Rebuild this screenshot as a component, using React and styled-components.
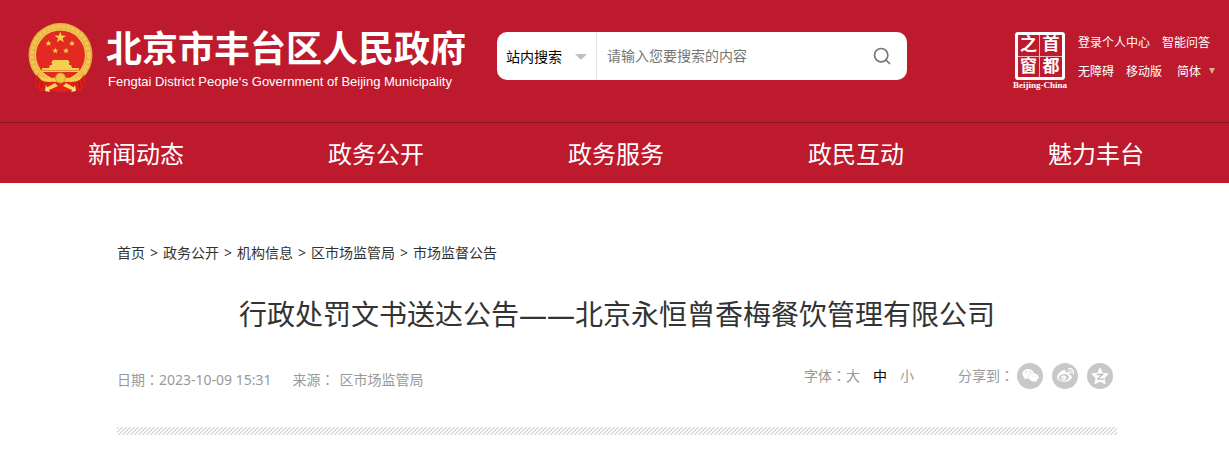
import React from "react"
import styled, { createGlobalStyle } from "styled-components"
import { FiSearch } from "react-icons/fi"
import { FaWeixin, FaWeibo } from "react-icons/fa"

const GlobalStyle = createGlobalStyle`
  * {
    box-sizing: border-box;
  }

  body {
    margin: 0;
    background-color: #fff;
    color: #333;
    font-family: "Noto Sans", "Noto Sans CJK SC", sans-serif;
    font-size: 14px;
    line-height: 20px;
  }

  a {
    color: inherit;
    text-decoration: none;
  }
`

const HeaderLayout = styled.header`
  background-color: #bd1a2d;
  color: #fff;
`

const TopBar = styled.div`
  display: flex;
  height: 122px;
  padding: 0 14px 0 28px;
`

const Brand = styled.a`
  display: flex;
  gap: 12px;
  padding-top: 22px;
`

const BrandName = styled.span`
  display: block;
  font-family: "Noto Sans CJK SC", sans-serif;
  font-size: 36px;
  font-weight: 700;
  line-height: 48px;
  white-space: nowrap;
`

const BrandEnglish = styled.span`
  display: block;
  padding: 4px 0 0 2px;
  font-family: "Liberation Sans", sans-serif;
  font-size: 13px;
  line-height: 16px;
`

const SearchForm = styled.form`
  display: flex;
  width: 410px;
  height: 48px;
  margin: 32px auto 0 31px;
  border-radius: 10px;
  background-color: #fff;
  overflow: hidden;
`

const ScopeLabel = styled.label`
  display: flex;
  align-items: center;
  width: 100px;
  padding: 2px 9px 0 9px;
  border-right: 1px solid #e4e4e4;
`

const Scope = styled.select`
  flex: 1;
  min-width: 0;
  padding: 0;
  border: 0;
  appearance: none;
  background: none;
  color: #000;
  font: inherit;
`

const Caret = styled.span`
  border: solid transparent;
  border-width: 6px 6px 0;
  border-top-color: #bfbfbf;
`

const SearchInput = styled.input`
  flex: 1;
  min-width: 0;
  padding: 0 10px;
  border: 0;
  outline: 0;
  background: none;
  font: inherit;

  &::placeholder {
    color: #757575;
  }
`

const SearchButton = styled.button`
  display: flex;
  align-items: center;
  padding: 0 15px;
  border: 0;
  background: none;
  color: #777;
  font-size: 20px;
`

const Tools = styled.div`
  display: flex;
  gap: 11px;
  padding-top: 32px;
`

const Capital = styled.a`
  display: flex;
  flex-direction: column;
  align-items: center;
  width: 54px;
`

const Seal = styled.span`
  display: grid;
  grid-template-columns: 1fr 1fr;
  width: 50px;
  height: 48px;
  border: 3px solid #fff;
  border-radius: 3px;
  font-family: "Liberation Sans", "Noto Sans CJK SC", sans-serif;
  font-size: 17px;
  font-weight: 700;
  line-height: 20px;
  text-align: center;

  & span:nth-child(odd) {
    border-right: 1px solid #f0b8be;
  }

  & span:nth-child(-n + 2) {
    border-bottom: 1px solid #f0b8be;
  }
`

const SealCaption = styled.span`
  font-family: "Liberation Serif", serif;
  font-size: 9px;
  font-weight: 700;
  line-height: 10px;
  white-space: nowrap;
`

const ToolLinks = styled.div`
  display: grid;
  row-gap: 9px;
  align-content: start;
  padding-top: 1px;
  font-size: 12px;
  white-space: nowrap;
`

const ToolRow = styled.div`
  display: flex;
  gap: 12px;
`

const Language = styled.a`
  display: flex;
  gap: 8px;
  padding-left: 3px;

  &::after {
    content: "";
    height: 0;
    margin-top: 6px;
    border: solid transparent;
    border-width: 6px 3px 0;
    border-top-color: #d8b47c;
  }
`

const NavBar = styled.nav`
  padding: 2px 0 0 3px;
  border-top: 1px solid #8b1421;
`

const NavList = styled.div`
  display: grid;
  grid-template-columns: repeat(5, 1fr);
  max-width: 1200px;
  margin: 0 auto;
  font-size: 24px;
  line-height: 58px;
  text-align: center;
`

const Page = styled.main`
  padding: 60px 0 16px 5px;
`

const Article = styled.article`
  max-width: 1000px;
  margin: 0 auto;
`

const Crumbs = styled.nav`
  display: flex;
  gap: 5px;
`

const Title = styled.h1`
  margin: 30px 0 0;
  color: #333;
  font-size: 28px;
  font-weight: 400;
  line-height: 42px;
  text-align: center;
`

const MetaRow = styled.div`
  display: flex;
  justify-content: space-between;
  margin-top: 26px;
  color: #999;
`

const Facts = styled.div`
  display: flex;
  align-items: baseline;
  gap: 21px;
  padding-top: 8px;
`

const Source = styled.span`
  display: flex;
  align-items: baseline;
  gap: 5px;
`

const Actions = styled.div`
  display: flex;
  align-items: center;
  gap: 44px;
  padding-right: 4px;
`

const Colon = styled.span`
  font-family: "Noto Sans CJK TC", sans-serif;
`

const SizePicker = styled.div`
  display: flex;
  align-items: baseline;
`

const SizeButton = styled.button`
  margin-right: 13px;
  padding: 0;
  border: 0;
  background: none;
  color: ${props => (props.$active ? "#000" : "#999")};
  font: inherit;

  &:last-child {
    margin-right: 0;
  }
`

const Share = styled.div`
  display: flex;
  align-items: center;
  gap: 3px;
`

const ShareList = styled.div`
  display: flex;
  gap: 9px;
`

const ShareButton = styled.button`
  display: flex;
  align-items: center;
  justify-content: center;
  width: 26px;
  height: 26px;
  padding: 0;
  border: 0;
  border-radius: 50%;
  background-color: #c8c8c8;
  color: #fff;
  font-size: 17px;
`

const Stripes = styled.div`
  height: 8px;
  margin-top: 37px;
  background-image: linear-gradient(
    135deg,
    #dcdcdc 25%,
    #fff 25%,
    #fff 50%,
    #dcdcdc 50%,
    #dcdcdc 75%,
    #fff 75%
  );
  background-size: 4px 4px;
`

const NAV = ["新闻动态", "政务公开", "政务服务", "政民互动", "魅力丰台"]
const CRUMBS = ["首页", "政务公开", "机构信息", "区市场监管局", "市场监督公告"]

const starPoints = (cx, cy, r) =>
  Array.from({ length: 10 }, (_, i) => {
    const radius = i % 2 ? r * 0.4 : r
    const angle = (i * Math.PI) / 5 - Math.PI / 2
    return `${cx + radius * Math.cos(angle)},${cy + radius * Math.sin(angle)}`
  }).join(" ")

const Emblem = () => (
  <svg width="66" height="72" viewBox="0 0 66 72" aria-hidden="true">
    <defs>
      <linearGradient id="gold" x1="0" y1="0" x2="0" y2="1">
        <stop offset="0" stopColor="#e9b544" />
        <stop offset="0.5" stopColor="#dfa53a" />
        <stop offset="1" stopColor="#f3cb4a" />
      </linearGradient>
    </defs>
    <ellipse cx="32.5" cy="33" rx="32" ry="32" fill="url(#gold)" />
    <circle cx="32.5" cy="33" r="28.5" fill="none" stroke="#f0c552" strokeWidth="4" strokeDasharray="4 1" />
    <circle cx="32.5" cy="33" r="25.5" fill="#f6d35a" />
    <circle cx="32.5" cy="33" r="24.5" fill="#e32a22" />
    <g fill="#f5cf4e">
      <polygon points={starPoints(32.3, 15.5, 6)} />
      <polygon points={starPoints(20.5, 21.5, 3.2)} />
      <polygon points={starPoints(44, 21.5, 3.2)} />
      <polygon points={starPoints(27.3, 28.8, 3.2)} />
      <polygon points={starPoints(38, 28.8, 3.2)} />
      <path d="M25 38h15l2 3H23zM24 41h17v2H24zM22 43h21l1 3H21zM14 46h37v4H14z" />
    </g>
    <path d="M14 48.5h37" stroke="#e0952f" strokeWidth="1" />
    {/* ribbons knotted under the wheat ring */}
    <path d="M9 51q5 5 13 6l8 6-8 7-5-2-5 2-2-5-3 1z" fill="#d91f1c" />
    <path d="M56 51q-5 5-13 6l-8 6 8 7 5-2 5 2 2-5 3 1z" fill="#d91f1c" />
    <path d="M20 60h25v8q-12 4-25 0z" fill="#e2231d" />
    <path d="M8 50q5 6 14 6t10-5q2 5 11 5t14-6q-3 10-14 10-7 0-11-3-4 3-11 3Q11 60 8 50z" fill="#f6cd48" />
    <circle cx="32.5" cy="56" r="5" fill="#f3c545" stroke="#d8922b" strokeWidth="1" />
    <path d="M27 61l-9 5 1 3 11-5zM38 61l9 5-1 3-11-5z" fill="#f7d65a" />
    <path d="M18 63l4 7-5-1zM47 63l-4 7 5-1z" fill="#fbe27c" />
    <path d="M11 57l-2 7M54 57l2 7M14 60l-1 6M51 60l1 6" stroke="#a9151a" strokeWidth="1" />
  </svg>
)

const QzoneIcon = () => (
  <svg width="20" height="20" viewBox="0 0 20 20" aria-hidden="true">
    <path
      d="M10 2l2.4 5.2 5.800.7-4.300 4 1.200 5.900L10 15l-5.100 2.800 1.200-5.900-4.300-4 5.800-.7z"
      fill="#fff"
      stroke="#fff"
      strokeLinejoin="round"
    />
    <path d="M6.800 8.500h5.800L7.800 12.800q3 .7 6 .2" fill="none" stroke="#bbb" strokeWidth="1.3" />
  </svg>
)

const App = () => (
  <>
    <GlobalStyle />
    <HeaderLayout>
      <TopBar>
        <Brand href="#">
          <Emblem />
          <span>
            <BrandName>北京市丰台区人民政府</BrandName>
            <BrandEnglish>Fengtai District People‘s Government of Beijing Municipality</BrandEnglish>
          </span>
        </Brand>
        <SearchForm>
          <ScopeLabel>
            <Scope aria-label="搜索范围">
              <option>站内搜索</option>
            </Scope>
            <Caret />
          </ScopeLabel>
          <SearchInput aria-label="搜索" placeholder="请输入您要搜索的内容" />
          <SearchButton type="button" aria-label="搜索"><FiSearch /></SearchButton>
        </SearchForm>
        <Tools>
          <Capital href="#">
            <Seal><span>之</span><span>首</span><span>窗</span><span>都</span></Seal>
            <SealCaption>Beijing-China</SealCaption>
          </Capital>
          <ToolLinks>
            <ToolRow><a href="#">登录个人中心</a><a href="#">智能问答</a></ToolRow>
            <ToolRow><a href="#">无障碍</a><a href="#">移动版</a><Language href="#">简体</Language></ToolRow>
          </ToolLinks>
        </Tools>
      </TopBar>
      <NavBar>
        <NavList>
          {NAV.map(item => <a href="#" key={item}>{item}</a>)}
        </NavList>
      </NavBar>
    </HeaderLayout>
    <Page>
      <Article>
        <Crumbs>
          {CRUMBS.map((item, i) => (
            <React.Fragment key={item}>
              {i > 0 && <span>&gt;</span>}
              <a href="#">{item}</a>
            </React.Fragment>
          ))}
        </Crumbs>
        <Title>行政处罚文书送达公告——北京永恒曾香梅餐饮管理有限公司</Title>
        <MetaRow>
          <Facts>
            <span>日期<Colon>：</Colon>2023-10-09 15:31</span>
            <Source><span>来源<Colon>：</Colon></span><span>区市场监管局</span></Source>
          </Facts>
          <Actions>
            <SizePicker>
              <span>字体<Colon>：</Colon></span>
              <SizeButton>大</SizeButton>
              <SizeButton $active>中</SizeButton>
              <SizeButton>小</SizeButton>
            </SizePicker>
            <Share>
              <span>分享到<Colon>：</Colon></span>
              <ShareList>
                <ShareButton aria-label="微信"><FaWeixin /></ShareButton>
                <ShareButton aria-label="微博"><FaWeibo /></ShareButton>
                <ShareButton aria-label="QQ空间"><QzoneIcon /></ShareButton>
              </ShareList>
            </Share>
          </Actions>
        </MetaRow>
        <Stripes />
      </Article>
    </Page>
  </>
)

export default App
